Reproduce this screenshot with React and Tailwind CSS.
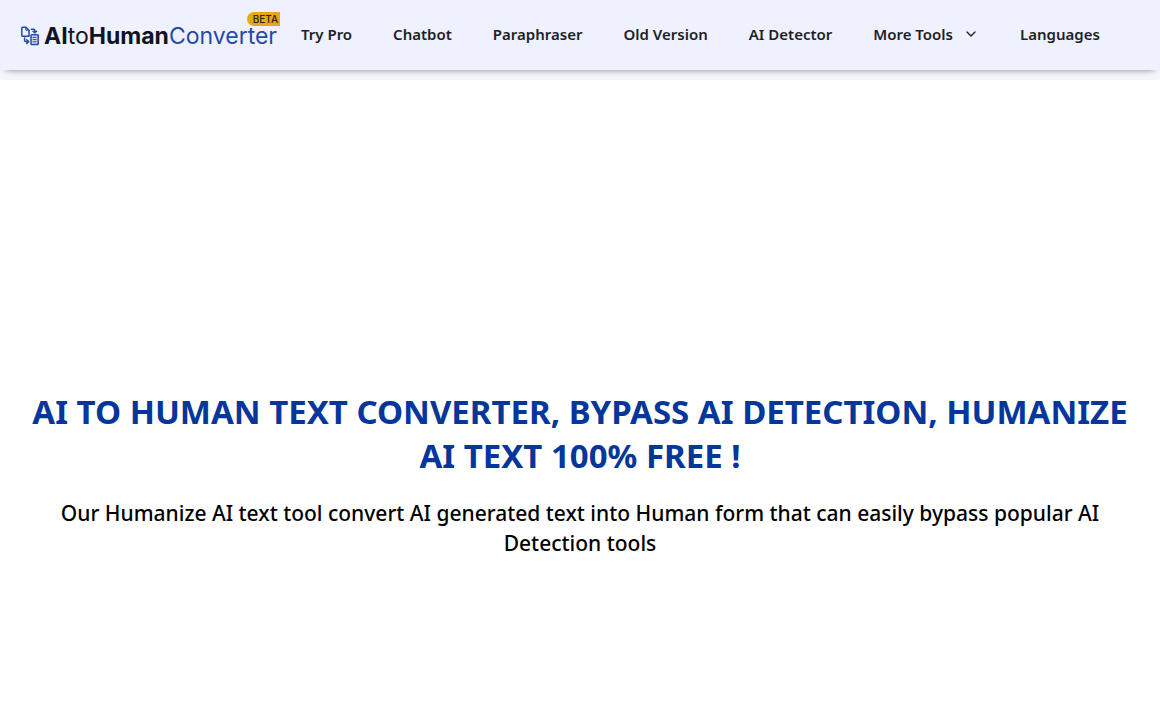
import { ChevronDown } from "lucide-react";

const links = ["Try Pro", "Chatbot", "Paraphraser", "Old Version", "AI Detector"];

const LogoMark = () => (
  <svg
    viewBox="0 0 20 20"
    className="h-5 w-5 shrink-0"
    fill="none"
    stroke="#2549a0"
    strokeWidth="1.5"
    strokeLinejoin="round"
    strokeLinecap="round"
    aria-hidden="true"
  >
    <path d="M2.6 1.2h3.4l3 3v6h-6.4a.8.8 0 0 1-.8-.8V2a.8.8 0 0 1 .8-.8z" />
    <path d="M5.8 1.4v2.8h3" strokeWidth="1" />
    <path d="M11.4 3.2h2.4a1 1 0 0 1 1 1v2.4M13 5.2l1.8 1.6 1.8-1.6" />
    <path d="M4.6 12v2.6a1 1 0 0 0 1 1h2.6M6.8 13.8l1.8 1.8-1.8 1.8" />
    <rect x="11" y="8.8" width="7.2" height="9.8" rx=".8" fill="#d5dff8" />
    <path d="M13 11.4h3.2M13 13.6h3.2M13 15.8h3.2" strokeWidth="1" />
  </svg>
);

const Logo = () => (
  <a
    href="/"
    className="relative flex w-[260px] shrink-0 items-center gap-1 pt-0.5 font-['Inter','Liberation_Sans',sans-serif] text-[23px] leading-5 text-[#0e1424]"
  >
    <LogoMark />
    <span className="whitespace-nowrap">
      <span className="font-bold">AI</span>
      <span>to</span>
      <span className="font-bold">Human</span>
      <span className="text-[#2549a8]">Converter</span>
    </span>
    <span className="absolute -top-3 right-0 rounded-l-full bg-[#e6a81b] pr-0.5 pl-1.5 text-[10px] leading-[14px] font-medium text-[#2c2412]">
      BETA
    </span>
  </a>
);

const App = () => {
  return (
    <div className="font-['Noto_Sans','Open_Sans',sans-serif]">
      <div className="bg-[#f2f6f8] pb-2.5">
        <header className="flex h-[70px] items-center bg-[#eff1ff] pl-5 shadow-[0_6px_6px_-6px_rgba(0,0,0,0.45)]">
          <Logo />
          <nav className="ml-[21px] flex items-center gap-[41px] pb-0.5 text-[15px] font-semibold whitespace-nowrap text-[#1c1f26]">
            {links.map((label) => (
              <a key={label} href="#">
                {label}
              </a>
            ))}
            <button type="button" className="flex items-center gap-2.5">
              More Tools
              <ChevronDown className="h-4 w-4" strokeWidth={2} />
            </button>
            <a href="#">Languages</a>
          </nav>
        </header>
      </div>

      <main className="px-5 pt-[310px] text-center">
        <h1 className="text-[33px] leading-11 font-bold text-[#04369b] uppercase">
          AI to Human Text Converter, Bypass AI Detection, Humanize AI Text 100% Free !
        </h1>
        <p className="mt-5 text-[21px] leading-[30px] font-[550] text-black">
          Our Humanize AI text tool convert AI generated text into Human form that can easily bypass popular AI
          Detection tools
        </p>
      </main>
    </div>
  );
};

export default App;
